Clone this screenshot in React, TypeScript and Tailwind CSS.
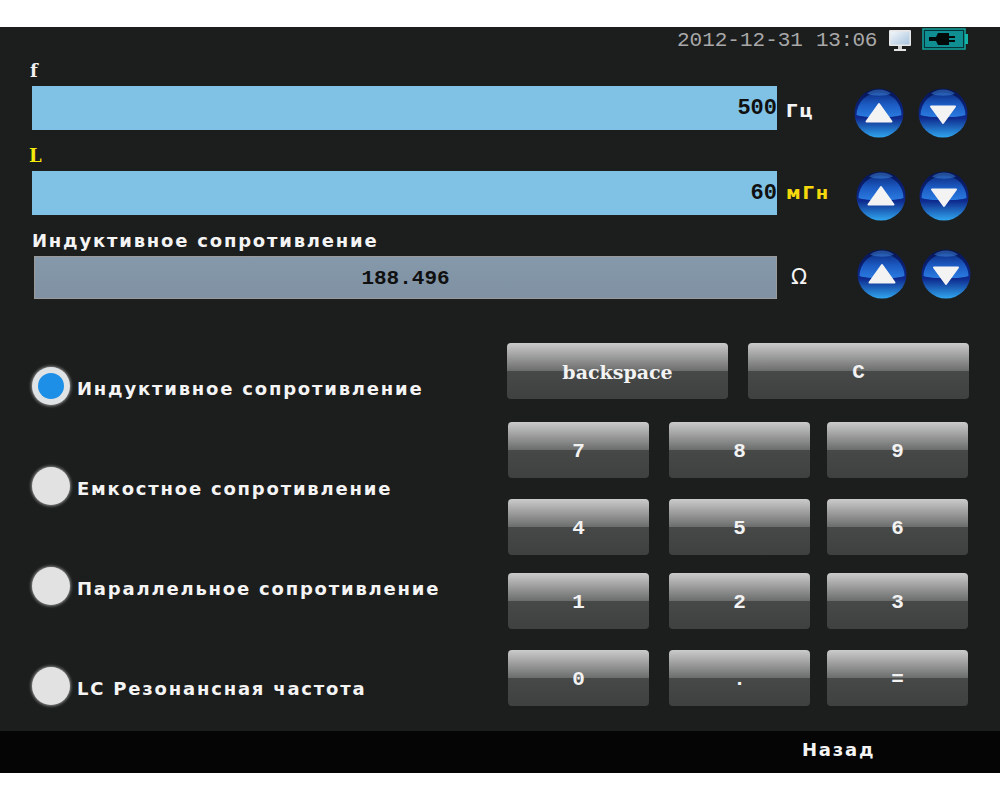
const mono = "font-['Liberation_Mono',monospace]";
const label = "font-['DejaVu_Sans',sans-serif] font-bold text-[18px] leading-none tracking-[1.8px] text-[#f4f4f4] whitespace-nowrap";
const serif = "font-['DejaVu_Serif',serif] font-bold";

const Monitor = () => (
  <svg width="24" height="24" viewBox="0 0 24 24">
    <defs>
      <linearGradient id="scr" x1="0" y1="0" x2="1" y2="1">
        <stop offset="0" stopColor="#f2f6fa" />
        <stop offset="1" stopColor="#a9c4de" />
      </linearGradient>
    </defs>
    <rect x="1" y="1" width="22" height="16" rx="1" fill="#e8e8e8" />
    <rect x="2.5" y="2.5" width="19" height="13" fill="url(#scr)" />
    <rect x="10" y="17" width="4" height="3" fill="#cfcfcf" />
    <rect x="6" y="20" width="12" height="2" fill="#e4e4e4" />
  </svg>
);

const Battery = () => (
  <svg width="46" height="22" viewBox="0 0 46 22">
    <rect x="1" y="1" width="42" height="20" fill="#06323a" stroke="#12a59d" strokeWidth="1.5" />
    <rect x="3" y="3" width="38" height="16" fill="#0f8f92" />
    <rect x="43" y="6" width="3" height="10" fill="#13b3a5" />
    <path d="M7 9h7l2-4h11v3h6v2h-6v2h6v2h-6v3H16l-2-4H7z" fill="#020a0a" />
  </svg>
);

const Arrow = ({ id, up }: { id: string; up?: boolean }) => (
  <svg width="50" height="50" viewBox="0 0 50 50">
    <defs>
      <linearGradient id={`top${id}`} x1="0" y1="0" x2="0" y2="1">
        <stop offset="0" stopColor="#0d2f86" />
        <stop offset="0.5" stopColor="#1c5cc4" />
        <stop offset="1" stopColor="#2a7be0" />
      </linearGradient>
      <linearGradient id={`bot${id}`} x1="0" y1="0" x2="0" y2="1">
        <stop offset="0" stopColor="#061452" />
        <stop offset="0.6" stopColor="#0e2a8e" />
        <stop offset="1" stopColor="#30a6ee" />
      </linearGradient>
    </defs>
    <circle cx="25" cy="25" r="24.5" fill={`url(#bot${id})`} />
    <path d="M2.5 27a22.5 22.5 0 0 1 45 0c-7 3-38 3-45 0z" fill={`url(#top${id})`} />
    <path d="M13 5.5a20 20 0 0 1 24 0c-6 3-18 3-24 0z" fill="#3f86dc" opacity="0.5" />
    {up ? (
      <path d="M25 16 37.5 33.5H12.5z" fill="#f3f3f3" stroke="#f3f3f3" strokeWidth="2" strokeLinejoin="round" />
    ) : (
      <path d="M13 18.5H37L25 35z" fill="#f3f3f3" stroke="#f3f3f3" strokeWidth="2" strokeLinejoin="round" />
    )}
  </svg>
);

const Field = ({
  id, title, titleClass, value, unit, unitClass, barClass, shift, gap,
}: {
  id: string; title: string; titleClass: string; value: string; unit: string; unitClass: string;
  barClass: string; shift: string; gap: string;
}) => (
  <div>
    <div className={titleClass}>{title}</div>
    <div className="flex h-[44px] items-center">
      <div className={barClass}>{value}</div>
      <div className={unitClass}>{unit}</div>
      <div className={`flex items-center ${shift} ${gap}`}>
        <Arrow id={`${id}u`} up />
        <Arrow id={`${id}d`} />
      </div>
    </div>
  </div>
);

const Radio = ({ text, on }: { text: string; on?: boolean }) => (
  <div className="flex h-[100px] items-center">
    <div className={`flex h-[38px] w-[38px] shrink-0 items-center justify-center rounded-full shadow-[0_0_3px_1px_#8a8a8a] ${on ? "bg-[#dfe3e6]" : "bg-[#e2e2e2]"}`}>
      {on && <div className="h-[26px] w-[26px] rounded-full bg-[#1d8fe6]" />}
    </div>
    <span className={`${label} ml-[7px] pt-[6px]`}>{text}</span>
  </div>
);

const Key = ({ text, size, small }: { text: string; size: string; small?: boolean }) => (
  <button className={`flex h-[56px] items-center justify-center rounded-[4px] bg-[linear-gradient(#cbcbcb_0%,#6b6c6c_50%,#474949_50%,#3f4141_100%)] pt-[3px] text-[#f2f2f2] ${size} ${small ? `${serif} text-[19px] pt-[1px]` : `${mono} text-[21px] font-bold`}`}>
    {text}
  </button>
);

export default function App() {
  return (
    <div className="flex h-[800px] w-[1000px] flex-col bg-white pt-[27px]">
      <div className="h-[704px] bg-[#1c1d1d]">
        <div className="flex h-[30px] items-start justify-end pr-[32px]">
          <span className={`${mono} mt-[2px] text-[21px] leading-[24px] text-[#a8a8a8]`}>2012-12-31</span>
          <span className={`${mono} ml-[13px] mt-[2px] text-[21px] leading-[24px] tracking-[-0.4px] text-[#a8a8a8]`}>13:06</span>
          <div className="ml-[11px] mt-[2px]"><Monitor /></div>
          <div className="ml-[10px] mt-[1px]"><Battery /></div>
        </div>

        <Field
          id="f"
          title="f"
          titleClass={`${serif} ml-[30px] h-[29px] pt-[3px] text-[18px] leading-[22px] text-[#f0f0f0]`}
          value="500"
          unit="Гц"
          unitClass={`${label} ml-[9px] w-[68px] pt-[6px] tracking-[1.2px]`}
          barClass={`${mono} ml-[32px] flex h-[44px] w-[745px] items-center justify-end bg-[#80c2e6] text-[22px] font-bold text-[#101010]`}
          shift="mt-[10px]"
          gap="gap-[14px]"
        />
        <Field
          id="l"
          title="L"
          titleClass={`${serif} ml-[29px] h-[41px] pt-[15px] text-[18px] leading-[22px] text-[#f5e90c]`}
          value="60"
          unit="мГн"
          unitClass={`${label} ml-[9px] w-[70px] tracking-[1.2px] text-[#f5d90c]`}
          barClass={`${mono} ml-[32px] flex h-[44px] w-[745px] items-center justify-end bg-[#80c2e6] text-[22px] font-bold text-[#101010]`}
          shift="mt-[6px]"
          gap="gap-[13px]"
        />
        <Field
          id="x"
          title="Индуктивное сопротивление"
          titleClass={`${label} ml-[32px] h-[40px] pt-[17px]`}
          value="188.496"
          unit="Ω"
          unitClass="font-['DejaVu_Sans',sans-serif] text-[21px] leading-none text-[#f4f4f4] ml-[14px] w-[66px]"
          barClass={`${mono} ml-[34px] flex h-[43px] w-[743px] items-center justify-center border border-[#9a9a9a] bg-[linear-gradient(#8599ab,#7f91a3)] pt-[4px] text-[21px] font-bold text-[#101010]`}
          shift="mb-[6px]"
          gap="gap-[14px]"
        />

        <div className="flex">
          <div className="ml-[32px] mt-[37px] w-[475px]">
            <Radio text="Индуктивное сопротивление" on />
            <Radio text="Емкостное сопротивление" />
            <Radio text="Параллельное сопротивление" />
            <Radio text="LC Резонансная частота" />
          </div>
          <div className="mt-[44px]">
            <div className="flex gap-[20px]">
              <Key text="backspace" size="w-[221px]" small />
              <Key text="C" size="w-[221px]" />
            </div>
            <div className="ml-[1px] mt-[23px] flex gap-[20px]">
              <Key text="7" size="w-[141px]" />
              <Key text="8" size="w-[141px]" />
              <Key text="9" size="w-[141px] ml-[-3px]" />
            </div>
            <div className="ml-[1px] mt-[21px] flex gap-[20px]">
              <Key text="4" size="w-[141px]" />
              <Key text="5" size="w-[141px]" />
              <Key text="6" size="w-[141px] ml-[-3px]" />
            </div>
            <div className="ml-[1px] mt-[18px] flex gap-[20px]">
              <Key text="1" size="w-[141px]" />
              <Key text="2" size="w-[141px]" />
              <Key text="3" size="w-[141px] ml-[-3px]" />
            </div>
            <div className="ml-[1px] mt-[21px] flex gap-[20px]">
              <Key text="0" size="w-[141px]" />
              <Key text="." size="w-[141px]" />
              <Key text="=" size="w-[141px] ml-[-3px]" />
            </div>
          </div>
        </div>
      </div>
      <div className="flex h-[42px] items-center bg-[#050505] pb-[4px] pl-[802px]">
        <span className={`${label} tracking-[1.2px]`}>Назад</span>
      </div>
    </div>
  );
}
